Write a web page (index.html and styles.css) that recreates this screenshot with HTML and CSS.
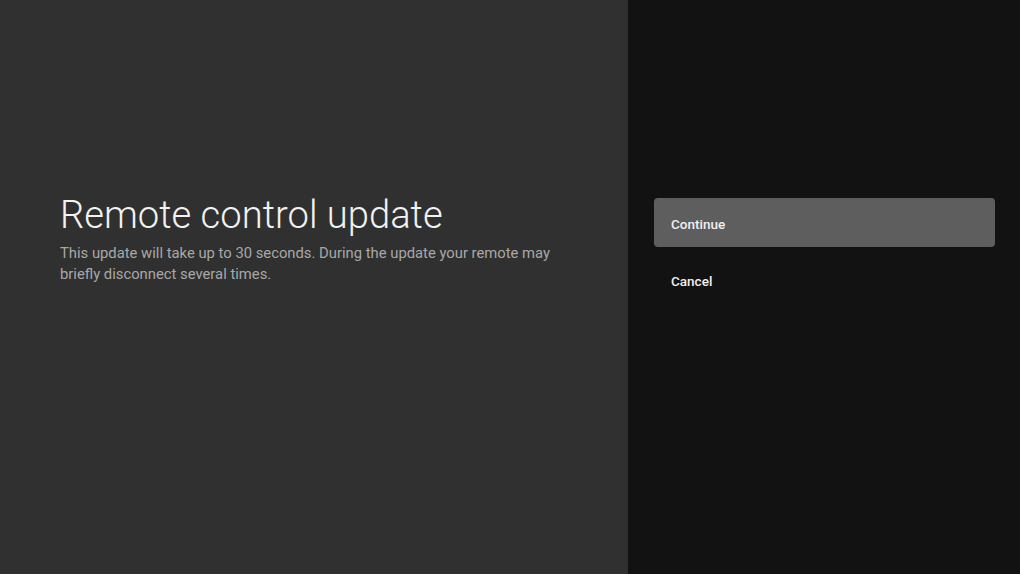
FILE: index.html
```html
<!DOCTYPE html>
<html>
<head>
<meta charset="utf-8">
<link rel="stylesheet" href="styles.css">
</head>
<body>
<div class="screen">
  <section class="info">
    <h1 class="title">Remote control update</h1>
    <p class="desc">This update will take up to 30 seconds. During the update your remote may briefly disconnect several times.</p>
  </section>
  <aside class="actions">
    <div class="action focused">Continue</div>
    <div class="action">Cancel</div>
  </aside>
</div>
</body>
</html>
```
FILE: styles.css
```css
html, body {
  margin: 0;
  padding: 0;
  width: 1020px;
  height: 574px;
  overflow: hidden;
  font-family: Roboto, "Noto Sans", sans-serif;
}
.screen {
  display: flex;
  width: 1020px;
  height: 574px;
}
.info {
  width: 628px;
  background: #303030;
  box-sizing: border-box;
  padding: 191px 60px 0 60px;
}
.title {
  margin: 0;
  font-weight: 300;
  font-size: 38.2px;
  line-height: 48px;
  color: #f2f2f2;
  letter-spacing: 0;
}
.desc {
  margin: 4px 0 0 0;
  font-size: 14.8px;
  line-height: 21px;
  color: #a8a8a8;
  width: 500px;
}
.actions {
  flex: 1;
  background: #121212;
  box-sizing: border-box;
  padding: 198px 25px 0 26px;
  display: flex;
  flex-direction: column;
  gap: 8px;
}
.action {
  height: 49px;
  display: flex;
  align-items: center;
  padding: 3px 0 0 17px;
  box-sizing: border-box;
  font-size: 13.5px;
  font-weight: 500;
  color: #f0f0f0;
  border-radius: 4px;
  transform-origin: left center;
}
.action.focused {
  background: #5e5e5e;
}
```
